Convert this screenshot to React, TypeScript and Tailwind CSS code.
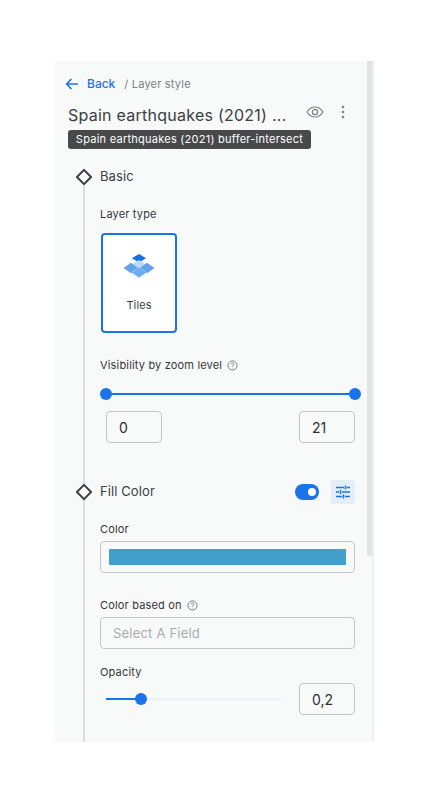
import React from "react";

function Help() {
  return (
    <svg width="11" height="11" viewBox="0 0 12 12" fill="none" stroke="#6f7577" strokeWidth="1" className="ml-[5px]">
      <circle cx="6" cy="6" r="5" />
      <path d="M4.500 4.700c0-.9.7-1.400 1.500-1.400s1.500.5 1.500 1.300c0 1.200-1.500 1.200-1.500 2.400" />
      <circle cx="6" cy="8.800" r=".5" fill="#6f7577" stroke="none" />
    </svg>
  );
}

function Diamond() {
  return (
    <span className="absolute left-[-6px] top-[-6px] h-[12px] w-[12px] rotate-45 rounded-[1px] border-2 border-[#3a3f41] bg-[#f8f9f9]" />
  );
}

function Box({ children, className = "" }: { children: React.ReactNode; className?: string }) {
  return (
    <div className={"flex h-[32px] items-center rounded border border-[#c4c6c6] text-[14px] text-[#2c3032] " + className}>
      {children}
    </div>
  );
}

function Label({ children, className = "" }: { children: React.ReactNode; className?: string }) {
  return <div className={"flex items-center text-[11px] leading-[16px] tracking-[0.17px] text-[#33383a] " + className}>{children}</div>;
}

export default function App() {
  return (
    <div className="h-[812px] w-[427px] bg-white pt-[61px] pl-[55px] font-['Inter',sans-serif]">
      <div className="flex h-[681px] w-[319px] overflow-hidden bg-[#f8f9f9]">
        <div className="relative min-w-0 flex-1 pt-[15px]">
          <div className="flex h-[16px] items-center pl-[10px]">
            <svg width="14" height="14" viewBox="0 0 14 14" fill="none" stroke="#1a73e8" strokeWidth="1.6">
              <path d="M13 7H2M6.500 2 1.700 7l4.800 5" />
            </svg>
            <span className="ml-[8px] text-[12px] font-medium text-[#1a73e8]">Back</span>
            <span className="ml-[9px] text-[11px] tracking-[0.2px] text-[#7b8082]">/ Layer style</span>
          </div>

          <div className="relative mt-[11px] flex h-[24px] items-center pl-[13px]">
            <span className="text-[16px] tracking-[0.25px] text-[#3a3f41]">Spain earthquakes (2021) ...</span>
            <svg width="18" height="12" viewBox="0 0 18 12" fill="none" stroke="#7b8082" strokeWidth="1.2" className="absolute left-[251px] top-[3px]">
              <path d="M1 6c2-3.200 4.800-5 8-5s6 1.800 8 5c-2 3.200-4.800 5-8 5S3 9.200 1 6Z" />
              <circle cx="9" cy="6" r="2.600" />
            </svg>
            <svg width="4" height="14" viewBox="0 0 4 14" fill="#7b8082" className="absolute left-[286px] top-[2px]">
              <circle cx="2" cy="2" r="1.300" />
              <circle cx="2" cy="7" r="1.300" />
              <circle cx="2" cy="12" r="1.300" />
            </svg>
            <div className="absolute left-[13px] top-[27px] flex h-[19px] w-[243px] items-center justify-center rounded-[3px] bg-[#47494b] text-[11px] tracking-[0.25px] text-white">
              Spain earthquakes (2021) buffer-intersect
            </div>
          </div>

          <div className="relative ml-[28px] mt-[38px] h-[577px] pl-[17px]">
            <div className="absolute bottom-0 left-0 top-[12px] w-[2px] bg-[#dcdedd]" />
            <div className="relative flex h-[24px] items-center text-[13px] tracking-[0.1px] text-[#3a3f41]">
              <span className="absolute left-[-16px] top-1/2"><Diamond /></span>
              Basic
            </div>
            <Label className="mt-[17px]">Layer type</Label>
            <div className="ml-[1px] mt-[11px] flex h-[100px] w-[76px] flex-col items-center rounded border-2 border-[#1a73e8] bg-white">
              <svg width="32" height="24" viewBox="0 0 32 24" className="mt-[19px]">
                <path d="M16 0l7 4.300-7 4.300-7-4.300Z" fill="#1a6fe0" />
                <path d="M16 6l6.500 4-6.500 4-6.500-4Z" fill="#bcd8f8" />
                <path d="M8 8.800l7.500 5.200-7.500 5.200L.5 14Z" fill="#5fa3ef" />
                <path d="M24 8.800l7.500 5.200-7.500 5.200-7.500-5.200Z" fill="#5fa3ef" />
                <path d="M16 13.300l7.500 5.200L16 23.700l-7.500-5.200Z" fill="#6cadf2" stroke="#bcd8f8" strokeWidth=".6" />
              </svg>
              <span className="mt-[19px] text-[11px] tracking-[0.1px] text-[#3a3f41]">Tiles</span>
            </div>

            <Label className="mt-[24px]">
              Visibility by zoom level
              <Help />
            </Label>
            <div className="relative ml-[6px] mt-[15px] h-[12px] w-[249px]">
              <div className="absolute left-0 right-0 top-[5px] h-[2px] bg-[#1a73e8]" />
              <span className="absolute left-[-6px] top-0 h-[12px] w-[12px] rounded-full bg-[#1a73e8]" />
              <span className="absolute right-[-6px] top-0 h-[12px] w-[12px] rounded-full bg-[#1a73e8]" />
            </div>
            <div className="mt-[11px] flex w-[255px] justify-between pl-[6px]">
              <Box className="w-[56px] pl-[12px]">0</Box>
              <Box className="w-[56px] pl-[12px]">21</Box>
            </div>

            <div className="relative mt-[37px] flex h-[24px] w-[255px] items-center text-[13px] tracking-[0.1px] text-[#3a3f41]">
              <span className="absolute left-[-16px] top-1/2"><Diamond /></span>
              Fill Color
              <span className="ml-auto mr-[12px] flex h-[16px] w-[24px] items-center justify-end rounded-full bg-[#1a73e8] pr-[3px]">
                <span className="h-[8px] w-[8px] rounded-full bg-white" />
              </span>
              <span className="flex h-[24px] w-[24px] items-center justify-center rounded-[2px] bg-[#e4eef9]">
                <svg width="16" height="14" viewBox="0 0 16 14" stroke="#1a73e8" strokeWidth="1.500" fill="none">
                  <path d="M1 2.500h8M12 2.500h3M10.500 .5v4M1 7h3M7 7h8M5.500 5v4M1 11.500h6M10 11.500h5M8.500 9.500v4" />
                </svg>
              </span>
            </div>

            <Label className="mt-[17px]">Color</Label>
            <Box className="mt-[4px] w-[255px] px-[8px]">
              <div className="h-[16px] w-full rounded-[1px] bg-[#429ecb]" />
            </Box>

            <Label className="mt-[24px]">
              Color based on
              <Help />
            </Label>
            <Box className="mt-[4px] w-[255px] pl-[12px]">
              <span className="pt-[1px] text-[13px] tracking-[0.2px] text-[#a9adaf]">Select A Field</span>
            </Box>

            <Label className="mt-[15px]">Opacity</Label>
            <div className="mt-[3px] flex w-[255px] items-center justify-between">
              <div className="relative ml-[6px] h-[12px] w-[175px]">
                <div className="absolute left-0 right-0 top-[5px] h-[2px] bg-[#e8f0fb]" />
                <div className="absolute left-0 top-[5px] h-[2px] w-[35px] bg-[#1a73e8]" />
                <span className="absolute left-[29px] top-0 h-[12px] w-[12px] rounded-full bg-[#1a73e8]" />
              </div>
              <Box className="w-[56px] pl-[12px]">0,2</Box>
            </div>
          </div>
        </div>
        <div className="w-[7px] border-r-2 border-[#eeefef]">
          <div className="h-[495px] w-full rounded-b-[2px] bg-[#e1e2e2]" />
        </div>
      </div>
    </div>
  );
}
